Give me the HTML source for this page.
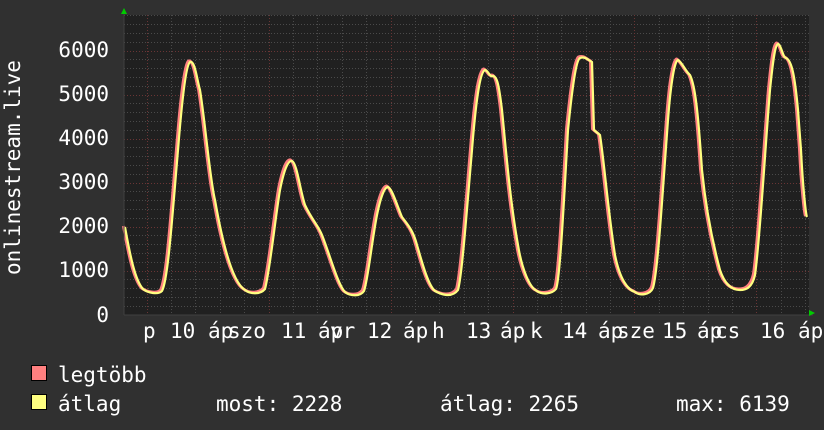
<!DOCTYPE html>
<html><head><meta charset="utf-8"><style>
html,body{margin:0;padding:0;background:#303030;}
svg{display:block}
text{font-family:"DejaVu Sans Mono","Liberation Mono",monospace;fill:#fff;font-size:21px}
</style></head><body>
<svg width="824" height="430" viewBox="0 0 824 430" xmlns="http://www.w3.org/2000/svg">
<rect width="824" height="430" fill="#303030"/>
<rect x="124" y="15" width="685" height="300" fill="#202020"/>
<g stroke="#4a4a4a" stroke-width="1" stroke-dasharray="1,2">
<path d="M124 306.5H809M124 297.5H809M124 288.5H809M124 279.5H809M124 262.5H809M124 253.5H809M124 244.5H809M124 235.5H809M124 218.5H809M124 209.5H809M124 200.5H809M124 191.5H809M124 174.5H809M124 165.5H809M124 156.5H809M124 147.5H809M124 130.5H809M124 121.5H809M124 112.5H809M124 103.5H809M124 86.5H809M124 77.5H809M124 68.5H809M124 59.5H809M124 42.5H809M124 33.5H809M124 24.5H809M124 15.5H809"/>
<path d="M171.5 15V315M195.5 15V315M220.5 15V315M244.5 15V315M293.5 15V315M317.5 15V315M342.5 15V315M366.5 15V315M415.5 15V315M439.5 15V315M464.5 15V315M488.5 15V315M537.5 15V315M561.5 15V315M586.5 15V315M610.5 15V315M659.5 15V315M683.5 15V315M708.5 15V315M732.5 15V315M781.5 15V315M805.5 15V315"/>
</g>
<g stroke="#6a3535" stroke-width="1" stroke-dasharray="1,2">
<path d="M124 271.5H809M124 227.5H809M124 183.5H809M124 139.5H809M124 95.5H809M124 51.5H809"/>
<path d="M147.5 15V315M269.5 15V315M391.5 15V315M513.5 15V315M634.5 15V315M756.5 15V315"/>
</g>
<path id="c" fill="none" stroke-linejoin="round" d="M125 227 C130 255,135 280,143 289 C148 293,158 295,162 291 C168 280,172 220,178 150 C182 100,186 65,190 62 C195 60,197 80,200 90 C205 120,210 180,215 200 C222 240,232 282,245 290 C250 294,260 295,265 289 C270 270,275 220,280 190 C284 170,288 160,292 161 C297 163,300 190,305 205 C312 220,318 225,322 235 C330 255,338 285,345 292 C350 296,360 297,364 291 C368 280,372 240,377 215 C380 200,384 187,388 187 C392 188,398 208,402 217 C408 225,413 230,417 245 C422 262,428 285,435 291 C442 295,452 298,458 290 C462 275,466 220,472 150 C476 100,480 72,485 70 C488 70,490 78,493 76 C497 76,499 85,502 110 C506 150,510 200,518 245 C522 270,530 288,537 291 C542 295,552 294,556 289 C560 280,564 200,568 130 C572 90,576 60,580 58 C585 56,588 60,592 62 L594 130 L600 135 C604 160,608 210,615 255 C620 280,628 290,635 292 C640 296,650 295,653 288 C658 270,662 200,668 120 C671 80,675 60,678 60 C682 62,686 72,690 75 C695 85,698 110,702 170 C706 210,712 240,720 270 C725 285,732 290,740 290 C746 290,752 288,755 275 C760 240,765 150,770 90 C773 60,775 45,778 44 C781 44,783 58,786 58 C792 60,795 78,798 110 L801 150 C803 190,806 215,807 217"/>
<use href="#c" stroke="#ff8080" stroke-width="3" transform="translate(-1.5,-1)"/>
<use href="#c" stroke="#ffff80" stroke-width="2.2"/>
<path d="M124 315H813M124 315V10" stroke="#404040" stroke-width="1"/>
<polygon points="121,14 127,14 124,8" fill="#00cc00"/>
<polygon points="809,310 809,316 815,313" fill="#00cc00"/>
<g text-anchor="end">
<text x="109" y="57">6000</text><text x="109" y="101">5000</text><text x="109" y="145">4000</text><text x="109" y="189">3000</text><text x="109" y="233">2000</text><text x="109" y="277">1000</text><text x="109" y="322">0</text>
</g>
<text transform="translate(20,275) rotate(-90)">onlinestream.live</text>
<g>
<text x="143" y="338">p</text><text x="170" y="338">10</text><text x="208" y="338">áp</text><text x="228" y="338">szo</text>
<text x="281" y="338">11</text><text x="318" y="338">áp</text><text x="330" y="338">vr</text>
<text x="367" y="338">12</text><text x="403" y="338">áp</text><text x="432" y="338">h</text>
<text x="466" y="338">13</text><text x="500" y="338">áp</text><text x="530" y="338">k</text>
<text x="562" y="338">14</text><text x="598" y="338">áp</text><text x="617" y="338">sze</text>
<text x="662" y="338">15</text><text x="697" y="338">áp</text><text x="715" y="338">cs</text>
<text x="760" y="338">16</text><text x="798" y="338">áp</text>
</g>
<rect x="31.5" y="365.5" width="15" height="15" fill="#ff8080" stroke="#000"/>
<rect x="31.5" y="394.5" width="15" height="15" fill="#ffff80" stroke="#000"/>
<text x="58" y="382">legtöbb</text>
<text x="58" y="411">átlag</text>
<text x="216" y="411">most: 2228</text>
<text x="440" y="411">átlag: 2265</text>
<text x="676" y="411">max: 6139</text>
</svg>
</body></html>
